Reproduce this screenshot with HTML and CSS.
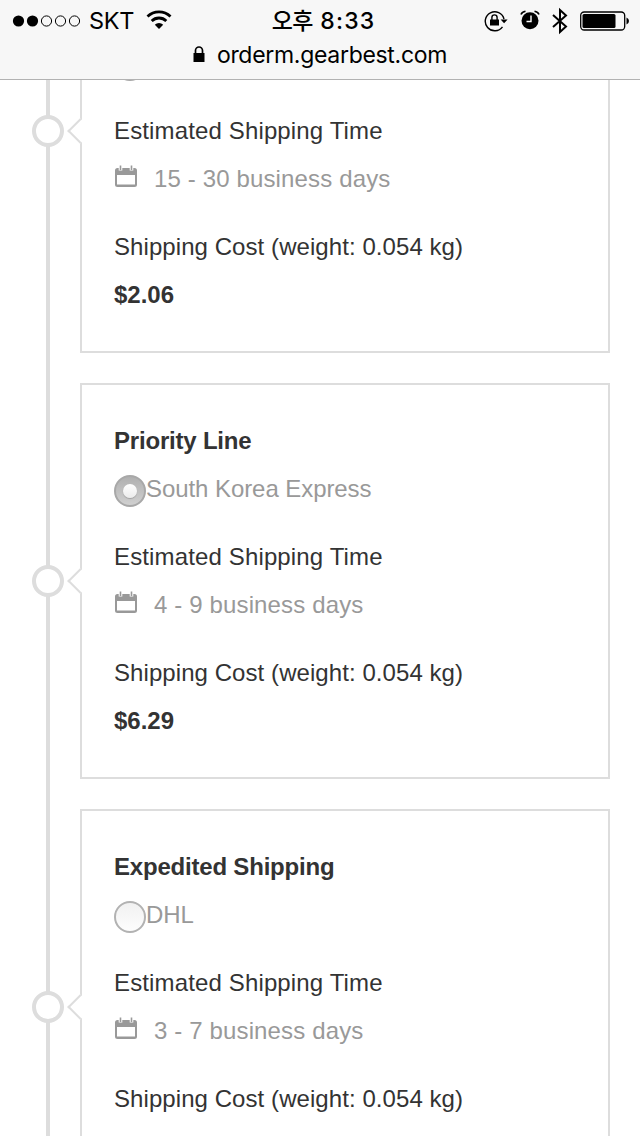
FILE: index.html
```
<!DOCTYPE html>
<html lang="en">
<head>
  <meta charset="UTF-8">
  <meta name="viewport" content="width=device-width, initial-scale=1.0">
  <title>Shipping Method</title>
  <link rel="stylesheet" href="styles.css">
</head>
<body>
  <svg class="sprite" aria-hidden="true">
    <symbol id="calendar" viewBox="0 0 24 24">
      <path d="M3.500 4h17a2.500 2.500 0 0 1 2.500 2.500v14a2.500 2.500 0 0 1-2.500 2.500h-17A2.500 2.500 0 0 1 1 20.500v-14A2.500 2.500 0 0 1 3.500 4zM3 11v9.500h18V11z" fill="currentColor" fill-rule="evenodd"/>
      <path d="M6.500 2v4.500M17.500 2v4.500" stroke="#fff" stroke-width="3.600"/>
      <path d="M6.500 1.500v4.500M17.500 1.500v4.500" stroke="currentColor" stroke-width="1.600"/>
    </symbol>
  </svg>

  <header class="browser">
    <div class="status">
      <div class="carrier">
        <svg width="70" height="14" viewBox="0 0 70 14">
          <circle cx="6.5" cy="7" r="5.6"/><circle cx="20.5" cy="7" r="5.6"/>
          <g fill="none" stroke="#000" stroke-width="1"><circle cx="34.5" cy="7" r="5.1"/><circle cx="48.5" cy="7" r="5.1"/><circle cx="62.5" cy="7" r="5.1"/></g>
        </svg>
        <span class="network">SKT</span>
        <svg class="wifi" width="26" height="20" viewBox="0 0 26 20">
          <path d="M1.5 6.5a16.5 16.5 0 0 1 23 0M5.7 11a10.4 10.4 0 0 1 14.6 0" fill="none" stroke="#000" stroke-width="2.8"/>
          <path d="M13 19l-4.2-4.3a6.2 6.2 0 0 1 8.4 0z"/>
        </svg>
      </div>
      <div class="time"><span class="ampm">오후</span> 8:33</div>
      <div class="indicators">
        <svg width="24" height="22" viewBox="0 0 24 22">
          <path d="M18.500 16.800A9.500 9.500 0 1 1 20 9" fill="none" stroke="#000" stroke-width="1.400"/>
          <path d="M16.600 9.500h7l-3.500 3.800zM6 9.500h9V15.500H6z"/>
          <path d="M7.900 10V7.500a2.600 2.600 0 0 1 5.200 0V10" fill="none" stroke="#000" stroke-width="1.400"/>
        </svg>
        <svg class="alarm" width="20" height="20" viewBox="0 0 20 20">
          <circle cx="10" cy="10.800" r="8.500"/>
          <path d="M1 4.500Q2 2 5.500 1.300M19 4.500Q18 2 14.500 1.300" fill="none" stroke="#000" stroke-width="1.600"/>
          <path d="M11 5.500v6H6.500" fill="none" stroke="#fff" stroke-width="1.400"/>
        </svg>
        <svg class="bluetooth" width="16" height="28" viewBox="0 0 16 28">
          <path d="M1 8l13 11.500L8 25V3l6 5.500L1 20" fill="none" stroke="#000" stroke-width="2"/>
        </svg>
        <svg class="battery" width="50" height="20" viewBox="0 0 50 20">
          <rect x=".7" y="1" width="44" height="18" rx="3.500" fill="none" stroke="#000" stroke-width="1.300"/>
          <rect x="2.500" y="3" width="33" height="14" rx="1.500"/>
          <path d="M46.500 6.500q2.500 1 2.500 3.500t-2.500 3.500z"/>
        </svg>
      </div>
    </div>
    <div class="address">
      <svg width="12" height="16" viewBox="0 0 12 16"><path d="M.5 7h11v9H.5z"/><path d="M2.500 8V4.500a3.500 3.500 0 0 1 7 0V8" fill="none" stroke="#000" stroke-width="1.700"/></svg>
      <span class="domain">orderm.gearbest.com</span>
    </div>
  </header>

  <main class="timeline">
    <section class="method method-scrolled">
      <div class="box">
        <div class="option"><span class="radio checked"></span></div>
        <h3 class="label time-label">Estimated Shipping Time</h3>
        <p class="days"><svg class="calendar"><use href="#calendar"/></svg><span>15 - 30 business days</span></p>
        <h3 class="label cost-label">Shipping Cost (weight: 0.054 kg)</h3>
        <p class="price">$2.06</p>
      </div>
    </section>
    <section class="method">
      <div class="box">
        <h2 class="name">Priority Line</h2>
        <div class="option"><span class="radio checked"></span><span>South Korea Express</span></div>
        <h3 class="label time-label">Estimated Shipping Time</h3>
        <p class="days"><svg class="calendar"><use href="#calendar"/></svg><span>4 - 9 business days</span></p>
        <h3 class="label cost-label">Shipping Cost (weight: 0.054 kg)</h3>
        <p class="price">$6.29</p>
      </div>
    </section>
    <section class="method">
      <div class="box">
        <h2 class="name">Expedited Shipping</h2>
        <div class="option"><span class="radio"></span><span>DHL</span></div>
        <h3 class="label time-label">Estimated Shipping Time</h3>
        <p class="days"><svg class="calendar"><use href="#calendar"/></svg><span>3 - 7 business days</span></p>
        <h3 class="label cost-label">Shipping Cost (weight: 0.054 kg)</h3>
        <p class="price">$</p>
      </div>
    </section>
  </main>
</body>
</html>
```

FILE: styles.css
```
:root {
  --line: #ddd;
  --text: #333;
  --muted: #999;
}
*, *::before, *::after { box-sizing: border-box; margin: 0; padding: 0; }
body {
  height: 1136px;
  overflow: hidden;
  display: flex;
  flex-direction: column;
  background: #fff;
  color: var(--text);
  font-family: "Liberation Sans", Arial, sans-serif;
  font-size: 24px;
  line-height: 48px;
}
svg { display: block; flex: none; }
.sprite { display: none; }

/* browser bar */
.browser {
  flex: none;
  height: 80px;
  background: #f7f7f7;
  border-bottom: 1px solid #b2b2b2;
  color: #000;
  font-family: Inter, "Noto Sans CJK KR", sans-serif;
  line-height: 38px;
}
.status {
  height: 40px;
  padding: 0 10px 0 12px;
  display: grid;
  grid-template-columns: 1fr auto 1fr;
  align-items: center;
}
.carrier, .indicators { display: flex; align-items: center; }
.network { margin-left: 7px; font-size: 23.5px; letter-spacing: -0.3px; }
.wifi { margin: -2px 0 0 12px; }
.time { padding: 0 0 2px 5px; font-size: 23px; font-weight: 500; letter-spacing: 1.2px; white-space: nowrap; }
.ampm { font-family: "Noto Sans CJK KR", sans-serif; letter-spacing: -0.5px; }
.indicators { justify-content: flex-end; }
.alarm { margin: -2px 0 0 12px; }
.bluetooth { margin: -1px 0 0 12px; }
.battery { margin-left: 12px; }
.address {
  height: 30px;
  display: flex;
  justify-content: center;
  align-items: center;
  gap: 12px;
  font-size: 23px;
  line-height: 30px;
}
.address svg { margin-top: -2px; }
.domain { letter-spacing: -0.3px; }

/* shipping timeline */
.timeline {
  flex: 1;
  min-height: 0;
  overflow: hidden;
  padding: 0 30px 0 32px;
  background: linear-gradient(var(--line), var(--line)) 46px 0 / 4px 100% no-repeat;
}
.method {
  position: relative;
  height: 396px;
  margin-bottom: 30px;
  padding-left: 48px;
}
.method-scrolled { height: 444px; margin-top: -171px; }
.method::before {
  content: "";
  position: absolute;
  left: 0;
  top: calc(50% - 16px);
  width: 32px;
  height: 32px;
  border: 4px solid var(--line);
  border-radius: 50%;
  background: #fff;
}
.box {
  height: 100%;
  padding: 32px;
  border: 2px solid var(--line);
  display: flex;
  flex-direction: column;
  justify-content: flex-end;
}
.method::after {
  content: "";
  position: absolute;
  left: 39px;
  top: calc(50% - 9px);
  width: 18px;
  height: 18px;
  border: solid var(--line);
  border-width: 0 0 2px 2px;
  background: #fff;
  transform: rotate(45deg);
}
.name, .price { font-size: 24px; font-weight: bold; }
.name { letter-spacing: -0.2px; }
.label { margin-top: 20px; font-size: 24px; font-weight: normal; }
.time-label { letter-spacing: 0.14px; }
.cost-label { letter-spacing: 0.07px; }
.option, .days { display: flex; align-items: center; height: 48px; color: var(--muted); }
.option { letter-spacing: -0.07px; }
.days { letter-spacing: 0.14px; }
.radio {
  width: 32px;
  height: 32px;
  margin-top: 4px;
  border: 2px solid #b2b2b2;
  border-radius: 50%;
  background: linear-gradient(#f1f1f1, #fdfdfd);
  display: flex;
  justify-content: center;
  align-items: center;
}
.radio.checked { border-color: #a8a8a8; background: linear-gradient(#b0b0b0, #d0d0d0); }
.radio.checked::after {
  content: "";
  width: 14px;
  height: 14px;
  border-radius: 50%;
  background: linear-gradient(#fff, #ececec);
  box-shadow: 0 1px 1px rgba(0, 0, 0, 0.2);
}
.calendar { width: 24px; height: 24px; margin: -7px 16px 0 0; }
```
